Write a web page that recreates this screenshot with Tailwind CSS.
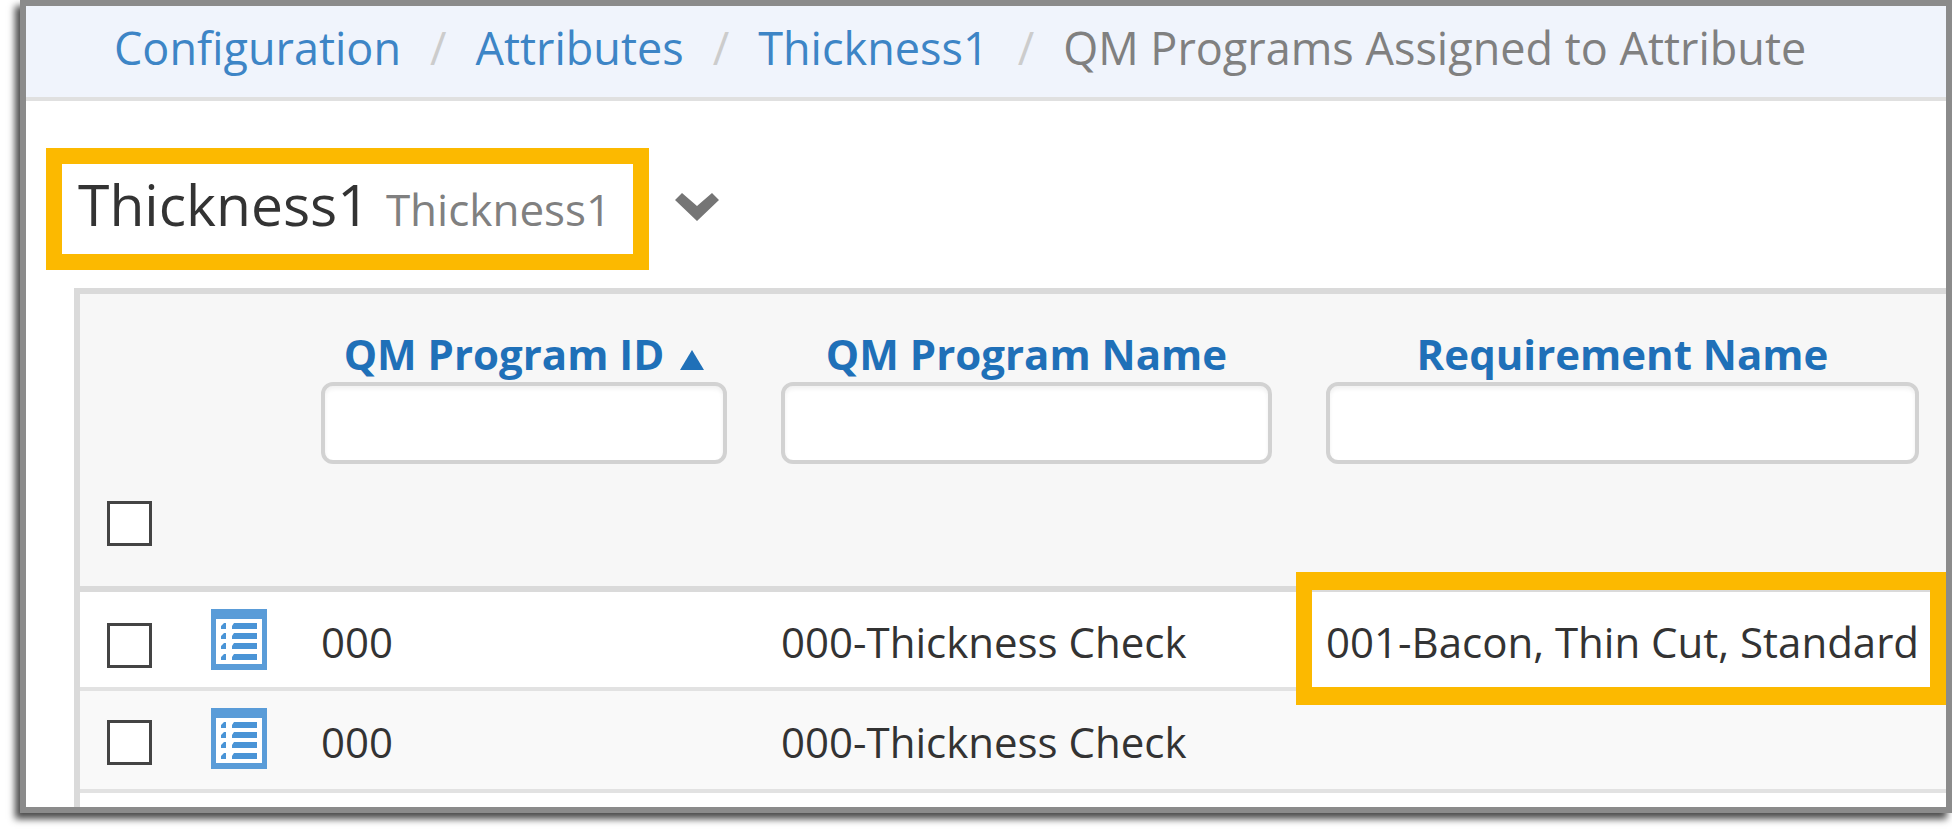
<!DOCTYPE html>
<html lang="en">
<head>
  <meta charset="UTF-8" />
  <meta name="viewport" content="width=device-width, initial-scale=1" />
  <title>QM Programs Assigned to Attribute</title>
  <script src="https://cdn.jsdelivr.net/npm/@tailwindcss/browser@4"></script>
</head>
<body class="bg-white pb-5 font-['Open_Sans','Noto_Sans',sans-serif] text-[#333]">
  <!-- Shared icon for the row detail links -->
  <svg class="hidden">
    <symbol id="list-icon" viewBox="0 0 56 61">
      <path fill="#5a9cd8" d="M0 0H56V61H0Z" />
      <path fill="#fff" d="M5 10H51V55H5Z" />
      <path fill="#4a94d6" d="M10 20V17L13 14H15V20ZM10 30V27L13 24H15V30ZM10 40V37L13 34H15V40ZM10 51V48L13 45H15V51Z" />
      <path fill="#4a94d6" d="M21 20V17L23 14H46V20ZM21 30V27L23 24H46V30ZM21 40V37L23 34H46V40ZM21 51V48L23 45H46V51Z" />
    </symbol>
  </svg>

  <main class="ml-5 border-6 border-[#8b8b8b] bg-white shadow-[-5px_6px_7px_rgba(0,0,0,0.7)]">
    <nav aria-label="Breadcrumb" class="border-b-4 border-[#e0e0e0] bg-[#f0f4fc]">
      <ol class="flex h-[91px] items-center gap-[29px] pb-2 pl-[88px] text-[45px] leading-[60px] whitespace-nowrap">
        <li><a href="#" class="text-[#3d85c6]">Configuration</a></li>
        <li aria-hidden="true" class="text-[#ccc]">/</li>
        <li><a href="#" class="text-[#3d85c6]">Attributes</a></li>
        <li aria-hidden="true" class="text-[#ccc]">/</li>
        <li><a href="#" class="text-[#3d85c6]">Thickness1</a></li>
        <li aria-hidden="true" class="text-[#ccc]">/</li>
        <li class="text-[#808080]">QM Programs Assigned to Attribute</li>
      </ol>
    </nav>

    <header class="flex items-center gap-[26px] pt-[47px] pl-5">
      <h1 class="flex h-[122px] w-[603px] items-baseline gap-4 border-16 border-[#fcb900] pl-4 text-[57px] leading-[80px] whitespace-nowrap">
        Thickness1
        <small class="text-[44px] text-[#808080]">Thickness1</small>
      </h1>
      <button type="button" aria-label="More" class="pb-1">
        <svg class="h-7 w-11" viewBox="0 0 44 28" fill="#757575">
          <path d="M0 7 7 0 22 13 37 0 44 7 22 28Z" />
        </svg>
      </button>
    </header>

    <section class="mt-[18px] ml-12 border-t-6 border-l-6 border-[#dadada]">
      <table class="w-full table-fixed border-separate border-spacing-0 text-left text-[42px] leading-[56px] whitespace-nowrap">
        <colgroup>
          <col class="w-[104px]" />
          <col class="w-[110px]" />
          <col class="w-[460px]" />
          <col class="w-[545px]" />
          <col />
        </colgroup>
        <thead class="bg-[#f7f7f7] text-[#1f70b8]">
          <tr class="h-[298px]">
            <th class="border-b-6 border-[#dadada] pb-10 pl-[27px] align-bottom">
              <input type="checkbox" aria-label="Select all rows" class="block size-[45px] appearance-none border-3 border-[#444] bg-white" />
            </th>
            <th class="border-b-6 border-[#dadada]"></th>
            <th class="border-b-6 border-[#dadada] px-[27px] pt-8 text-center align-top">
              <label for="programId" class="flex items-center justify-center gap-4">
                QM Program ID
                <svg class="mt-3 h-5 w-6" viewBox="0 0 24 20" fill="#1f70b8"><path d="M12 0 24 20H0Z" /></svg>
              </label>
              <input id="programId" type="text" class="block h-[82px] w-full rounded-xl border-4 border-[#d2d2d2] bg-white px-4 font-normal text-[#333] shadow-[inset_0_3px_4px_rgba(0,0,0,0.06)]" />
            </th>
            <th class="border-b-6 border-[#dadada] px-[27px] pt-8 text-center align-top">
              <label for="programName" class="block">QM Program Name</label>
              <input id="programName" type="text" class="block h-[82px] w-full rounded-xl border-4 border-[#d2d2d2] bg-white px-4 font-normal text-[#333] shadow-[inset_0_3px_4px_rgba(0,0,0,0.06)]" />
            </th>
            <th class="border-b-6 border-[#dadada] px-[27px] pt-8 text-center align-top">
              <label for="requirementName" class="block">Requirement Name</label>
              <input id="requirementName" type="text" class="block h-[82px] w-full rounded-xl border-4 border-[#d2d2d2] bg-white px-4 font-normal text-[#333] shadow-[inset_0_3px_4px_rgba(0,0,0,0.06)]" />
            </th>
          </tr>
        </thead>
        <tbody>
          <tr class="h-[99px]">
            <td class="border-b-4 border-[#e2e2e2] pt-3 pl-[27px]">
              <input type="checkbox" aria-label="Select row 1" class="block size-[45px] appearance-none border-3 border-[#444] bg-white" />
            </td>
            <td class="border-b-4 border-[#e2e2e2] pl-[27px]">
              <a href="#" aria-label="Details">
                <svg class="block h-[61px] w-14"><use href="#list-icon" /></svg>
              </a>
            </td>
            <td class="border-b-4 border-[#e2e2e2] px-[27px] pt-1">000</td>
            <td class="border-b-4 border-[#e2e2e2] px-[27px] pt-1">000-Thickness Check</td>
            <td class="relative border-b-4 border-[#e2e2e2] px-[27px] pt-1">
              001-Bacon, Thin Cut, Standard
              <span class="pointer-events-none absolute -top-5 right-0 -bottom-[18px] -left-[3px] border-x-16 border-y-18 border-[#fcb900]"></span>
            </td>
          </tr>
          <tr class="h-[102px] bg-[#f9f9f9]">
            <td class="border-b-4 border-[#e2e2e2] pt-1 pl-[27px]">
              <input type="checkbox" aria-label="Select row 2" class="block size-[45px] appearance-none border-3 border-[#444] bg-white" />
            </td>
            <td class="border-b-4 border-[#e2e2e2] pb-1 pl-[27px]">
              <a href="#" aria-label="Details">
                <svg class="block h-[61px] w-14"><use href="#list-icon" /></svg>
              </a>
            </td>
            <td class="border-b-4 border-[#e2e2e2] px-[27px] pt-1">000</td>
            <td class="border-b-4 border-[#e2e2e2] px-[27px] pt-1">000-Thickness Check</td>
            <td class="border-b-4 border-[#e2e2e2] px-[27px]"></td>
          </tr>
          <tr class="h-3.5">
            <td colspan="5"></td>
          </tr>
        </tbody>
      </table>
    </section>
  </main>
</body>
</html>
